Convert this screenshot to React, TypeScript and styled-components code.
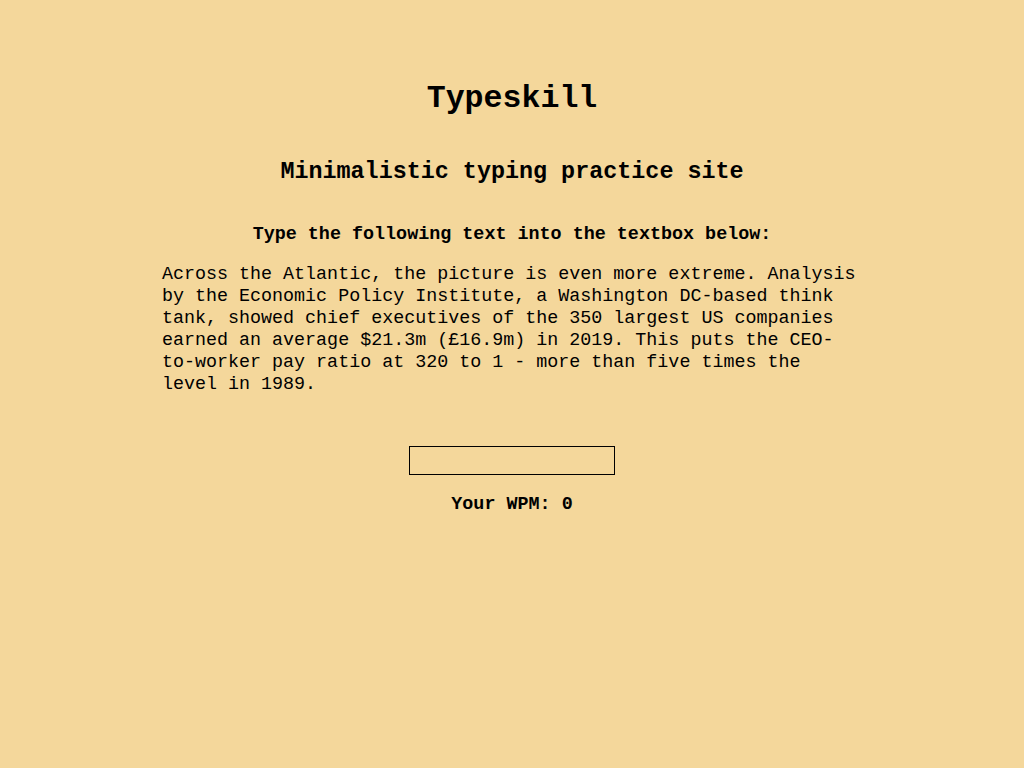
import React, { useState } from 'react';
import styled, { createGlobalStyle } from 'styled-components';

const GlobalStyle = createGlobalStyle`
  html, body {
    margin: 0;
    padding: 0;
    background-color: #f4d79b;
  }
  body {
    font-family: 'Liberation Mono', 'Courier New', monospace;
    color: #000000;
  }
`;

const Page = styled.main`
  min-height: 768px;
  padding-top: 81px;
  box-sizing: border-box;
  display: flex;
  flex-direction: column;
  align-items: center;
`;

const Title = styled.h1`
  margin: 0;
  font-size: 31.6px;
  line-height: 36px;
  font-weight: bold;
`;

const Subtitle = styled.h2`
  margin: 41px 0 0;
  font-size: 23.4px;
  line-height: 28px;
  font-weight: bold;
`;

const Instruction = styled.h3`
  margin: 38px 0 0;
  font-size: 18.4px;
  line-height: 22px;
  font-weight: bold;
`;

const Passage = styled.p`
  margin: 18px 0 0;
  width: 700px;
  font-size: 18.35px;
  line-height: 22px;
  text-align: left;
`;

const TypeBox = styled.input`
  margin-top: 50px;
  width: 206px;
  height: 29px;
  box-sizing: border-box;
  border: 1px solid #000000;
  background: transparent;
  font-family: inherit;
  font-size: 16px;
  padding: 0 4px;
  outline: none;
`;

const Score = styled.div`
  margin-top: 19px;
  font-size: 18.4px;
  line-height: 22px;
  font-weight: bold;
`;

const passage =
  'Across the Atlantic, the picture is even more extreme. Analysis by the Economic Policy Institute, a Washington DC-based think tank, showed chief executives of the 350 largest US companies earned an average $21.3m (£16.9m) in 2019. This puts the CEO-to-worker pay ratio at 320 to 1 - more than five times the level in 1989.';

const App = () => {
  const [typed, setTyped] = useState('');
  const wpm = 0;

  return (
    <>
      <GlobalStyle />
      <Page>
        <Title>Typeskill</Title>
        <Subtitle>Minimalistic typing practice site</Subtitle>
        <Instruction>Type the following text into the textbox below:</Instruction>
        <Passage>{passage}</Passage>
        <TypeBox value={typed} onChange={(e) => setTyped(e.target.value)} />
        <Score>Your WPM: {wpm}</Score>
      </Page>
    </>
  );
};

export default App;
